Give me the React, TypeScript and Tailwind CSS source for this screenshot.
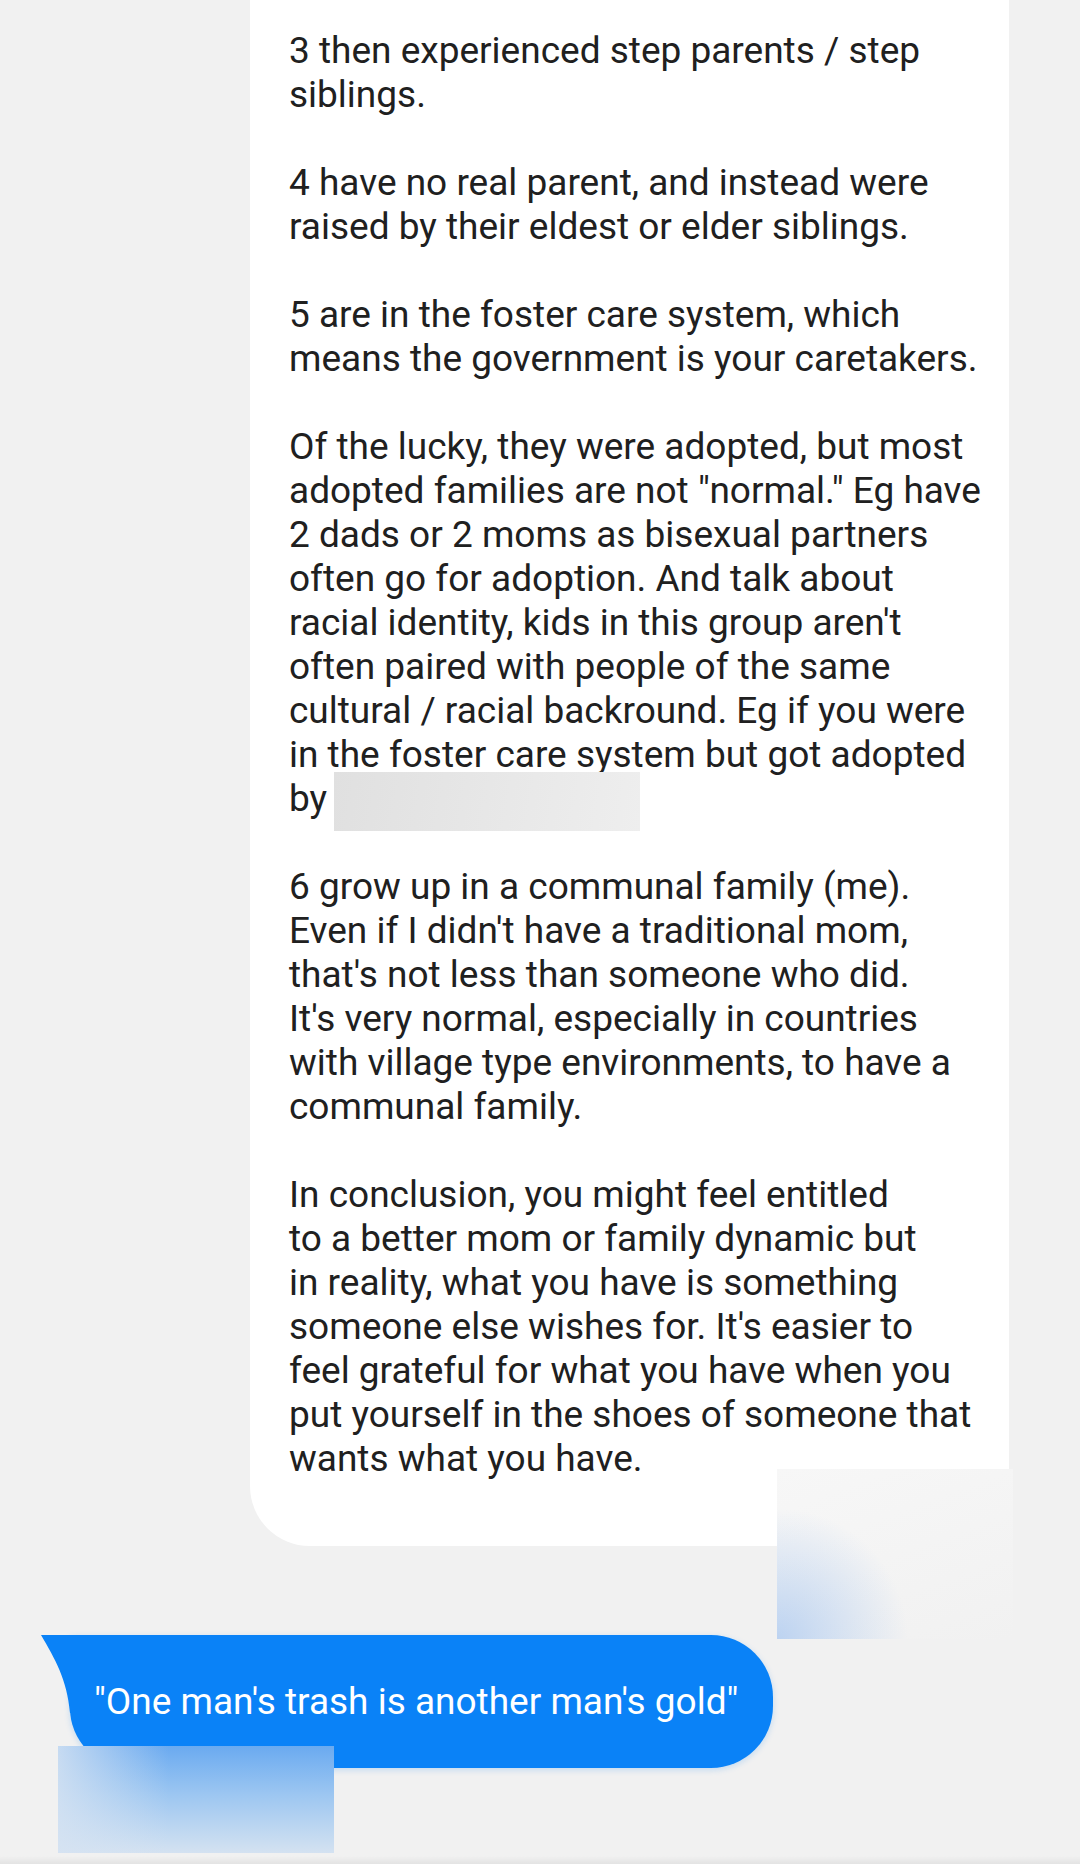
import React from 'react'

const paragraphs: string[][] = [
  ["3 then experienced step parents / step", "siblings."],
  ["4 have no real parent, and instead were", "raised by their eldest or elder siblings."],
  ["5 are in the foster care system, which", "means the government is your caretakers."],
  [
    "Of the lucky, they were adopted, but most",
    "adopted families are not \"normal.\" Eg have",
    "2 dads or 2 moms as bisexual partners",
    "often go for adoption. And talk about",
    "racial identity, kids in this group aren't",
    "often paired with people of the same",
    "cultural / racial backround. Eg if you were",
    "in the foster care system but got adopted",
    "by",
  ],
  [
    "6 grow up in a communal family (me).",
    "Even if I didn't have a traditional mom,",
    "that's not less than someone who did.",
    "It's very normal, especially in countries",
    "with village type environments, to have a",
    "communal family.",
  ],
  [
    "In conclusion, you might feel entitled",
    "to a better mom or family dynamic but",
    "in reality, what you have is something",
    "someone else wishes for. It's easier to",
    "feel grateful for what you have when you",
    "put yourself in the shoes of someone that",
    "wants what you have.",
  ],
]

function Line({ text }: { text: string }) {
  if (text === "by") {
    return (
      <div className="relative whitespace-nowrap">
        by
        {/* redacted name */}
        <span className="absolute left-[45px] top-[-5px] w-[306px] h-[59px] bg-[linear-gradient(100deg,#e0e0e0,#eeeeee)]" />
      </div>
    )
  }
  return <div className="whitespace-nowrap">{text}</div>
}

export default function App() {
  return (
    <div className="relative w-[1080px] h-[1864px] overflow-hidden bg-[#f1f1f1] font-['Roboto',sans-serif]">
      {/* incoming message */}
      <div className="relative ml-[250px] w-[759px]">
        <div className="flex flex-col gap-[44px] bg-white rounded-bl-[60px] pl-[39px] pt-[29px] pb-[65px] text-[37px] leading-[44px] text-[#202020]">
          {paragraphs.map((p, i) => (
            <div key={i}>
              {p.map((l) => (
                <Line key={l} text={l} />
              ))}
            </div>
          ))}
        </div>
        <div className="absolute left-[527px] top-[1469px] w-[236px] h-[170px] bg-[radial-gradient(circle_at_0%_100%,rgba(170,200,240,0.75),rgba(241,241,241,0)_45%),linear-gradient(160deg,#f7f7f7,#f1f1f1)]" />
      </div>

      {/* outgoing message */}
      <div className="relative mt-[89px] ml-[41px] w-[732px] h-[133px]">
        <svg className="absolute left-0 top-0" width="40" height="80" viewBox="0 0 40 80">
          <path d="M0 0 C14 24 26 44 29 78 L40 78 L40 0 Z" fill="#0a82f7" />
        </svg>
        <div className="ml-[29px] h-full flex items-center pl-[24px] bg-[#0a82f7] rounded-r-[62px] rounded-bl-[60px] shadow-[0_2px_6px_rgba(10,130,247,0.2)] text-white text-[37px] leading-[44px] whitespace-nowrap">
          "One man's trash is another man's gold"
        </div>
        <div className="absolute left-[17px] top-[111px] w-[276px] h-[107px] bg-[linear-gradient(to_right,rgba(214,227,242,0.85),rgba(214,227,242,0)_40%),linear-gradient(to_bottom,#6aaaf0,#9cc6f1_45%,#d4e2f1)]" />
      </div>

      <div className="absolute left-0 bottom-0 w-full h-[8px] bg-[linear-gradient(to_bottom,rgba(0,0,0,0),rgba(0,0,0,0.06))]" />
    </div>
  )
}
